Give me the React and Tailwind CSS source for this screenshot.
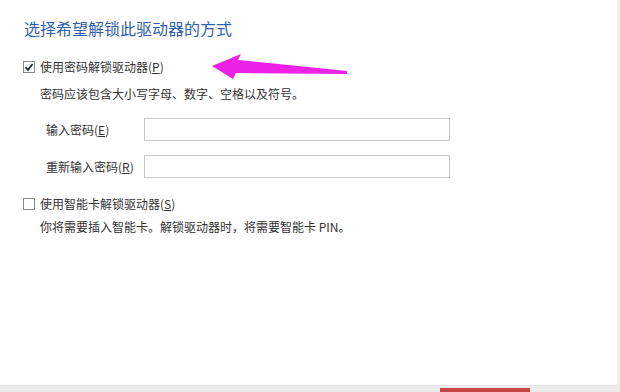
import React from 'react';

const font = { fontFamily: '"Noto Sans CJK SC", "Noto Sans", sans-serif' };

function Box({ checked }) {
  return (
    <span className="w-[12px] h-[12px] border border-[#8a8a8a] bg-white flex items-center justify-center shrink-0">
      {checked && (
        <svg width="10" height="10" viewBox="0 0 10 10">
          <path d="M1.5 5.2 L4 7.8 L8.6 2" fill="none" stroke="#1f2a3a" strokeWidth="1.8" />
        </svg>
      )}
    </span>
  );
}

function Field({ label, hotkey }) {
  return (
    <div className="flex items-center h-[37px]">
      <div className="w-[98px] text-[12px] text-[#333]">
        {label}(<span className="underline">{hotkey}</span>)
      </div>
      <div className="w-[306px] h-[23px] border border-[#c9c9c9] bg-white" />
    </div>
  );
}

export default function App() {
  return (
    <div className="w-[620px] h-[392px] bg-white flex flex-col relative overflow-hidden" style={font}>
      <div className="flex flex-1">
        <div className="flex-1 pl-[23px] pt-[17px]">
          <h1 className="text-[16px] leading-[22px] text-[#2f5fae] pl-[1px]">选择希望解锁此驱动器的方式</h1>

          <div className="flex items-center gap-[5px] mt-[19px] h-[18px]">
            <Box checked />
            <span className="text-[12px] text-[#333]">
              使用密码解锁驱动器(<span className="underline">P</span>)
            </span>
          </div>
          <p className="text-[12px] text-[#333] pl-[17px] mt-[9px] leading-[18px]">
            密码应该包含大小写字母、数字、空格以及符号。
          </p>

          <div className="pl-[23px] mt-[8px]">
            <Field label="输入密码" hotkey="E" />
            <Field label="重新输入密码" hotkey="R" />
          </div>

          <div className="flex items-center gap-[5px] mt-[10px] h-[18px]">
            <Box />
            <span className="text-[12px] text-[#333]">
              使用智能卡解锁驱动器(<span className="underline">S</span>)
            </span>
          </div>
          <p className="text-[12px] text-[#333] pl-[17px] mt-[5px] leading-[18px]">
            你将需要插入智能卡。解锁驱动器时，将需要智能卡 PIN。
          </p>
        </div>
        <div className="w-[3px] bg-[#efefef]" />
      </div>
      <div className="h-[7px] bg-[#ececec] border-t border-[#e2e2e2]">
        <div className="ml-[440px] mt-[2px] w-[90px] h-[4px] bg-[#c94444]" />
      </div>

      <svg className="absolute left-0 top-0 pointer-events-none" width="620" height="392">
        <polygon points="212,66 241,54 238,60 347,71 347,74 236,73 233,79" fill="#ee22e6" />
      </svg>
    </div>
  );
}
